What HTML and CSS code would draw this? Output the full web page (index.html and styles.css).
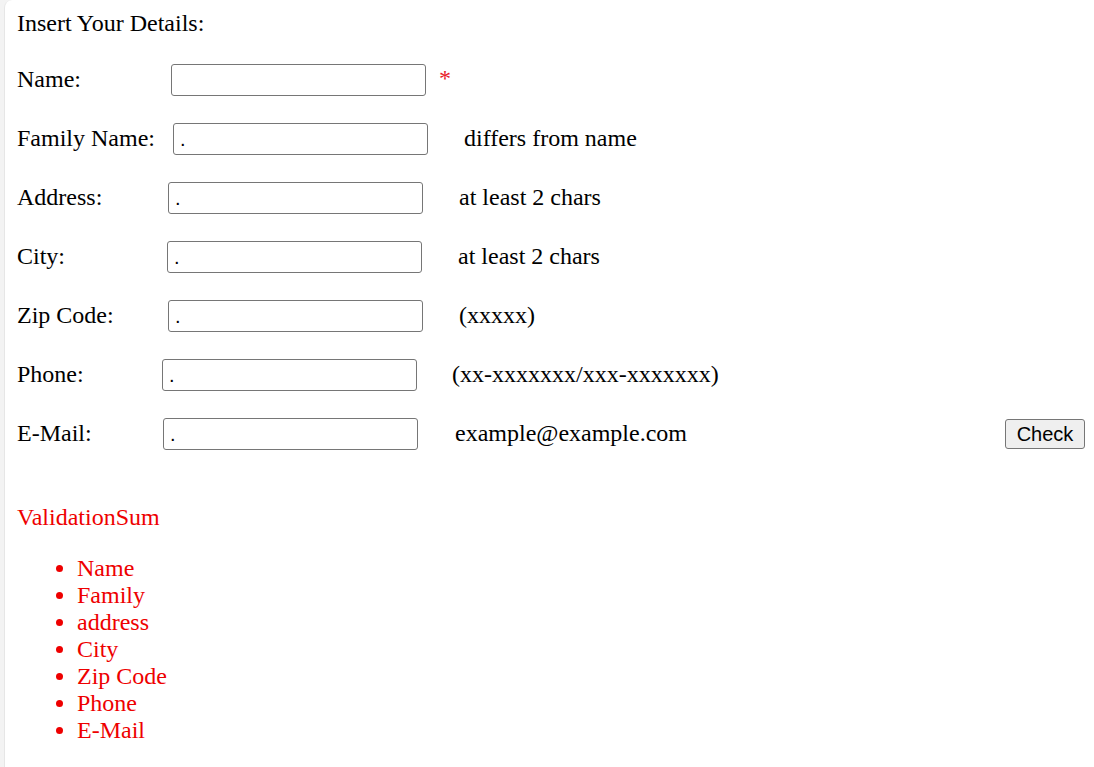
FILE: index.html
```html
<!DOCTYPE html>
<html>
<head>
<meta charset="utf-8">
<title>Insert Your Details</title>
<link rel="stylesheet" href="styles.css">
</head>
<body>
<div class="panel">
  <div class="title">Insert Your Details:</div>
  <form class="form">
    <div class="row">
      <label class="label l-name">Name:</label>
      <input class="field" type="text" value="">
      <span class="req">*</span>
    </div>
    <div class="row">
      <label class="label l-family">Family Name:</label>
      <input class="field" type="text" value=".">
      <span class="hint">differs from name</span>
    </div>
    <div class="row">
      <label class="label l-address">Address:</label>
      <input class="field" type="text" value=".">
      <span class="hint">at least 2 chars</span>
    </div>
    <div class="row">
      <label class="label l-city">City:</label>
      <input class="field" type="text" value=".">
      <span class="hint">at least 2 chars</span>
    </div>
    <div class="row">
      <label class="label l-zip">Zip Code:</label>
      <input class="field" type="text" value=".">
      <span class="hint">(xxxxx)</span>
    </div>
    <div class="row">
      <label class="label l-phone">Phone:</label>
      <input class="field" type="text" value=".">
      <span class="hint hint-phone">(xx-xxxxxxx/xxx-xxxxxxx)</span>
    </div>
    <div class="row">
      <label class="label l-email">E-Mail:</label>
      <input class="field" type="text" value=".">
      <span class="hint hint-email">example@example.com</span>
      <button class="check" type="button">Check</button>
    </div>
  </form>
  <div class="summary">ValidationSum</div>
  <ul class="errors">
    <li>Name</li>
    <li>Family</li>
    <li>address</li>
    <li>City</li>
    <li>Zip Code</li>
    <li>Phone</li>
    <li>E-Mail</li>
  </ul>
</div>
</body>
</html>
```

FILE: styles.css
```css
html, body {
  margin: 0;
  padding: 0;
}

body {
  background: #f3f3f3;
  font-family: "Liberation Serif", "Times New Roman", serif;
  font-size: 24px;
  color: #000;
}

.panel {
  margin-left: 4px;
  min-height: 767px;
  box-sizing: border-box;
  background: #fff;
  border-left: 1px solid #e6e6e6;
  border-top-left-radius: 8px;
  padding: 9px 9px 0 12px;
}

.title {
  line-height: 28px;
}

.form {
  display: flex;
  flex-direction: column;
  gap: 27px;
  margin-top: 27px;
}

.row {
  display: flex;
  align-items: center;
  height: 32px;
}

.label,
.hint {
  flex: none;
  line-height: 28px;
  margin-bottom: 2px;
}

.l-name { width: 154px; }
.l-family { width: 156px; }
.l-address { width: 151px; }
.l-city { width: 150px; }
.l-zip { width: 151px; }
.l-phone { width: 145px; }
.l-email { width: 146px; }

.field {
  box-sizing: border-box;
  width: 255px;
  height: 32px;
  margin: 0;
  padding: 0 6px;
  border: 1px solid #767676;
  border-radius: 3px;
  font-family: "Liberation Sans", Arial, sans-serif;
  font-size: 20px;
  color: #000;
  background: #fff;
}

.req {
  color: #e8202a;
  margin-left: 13px;
  position: relative;
  top: -2px;
}

.hint {
  margin-left: 36px;
}

.hint-phone { margin-left: 35px; }
.hint-email { margin-left: 37px; }

.check {
  margin-left: auto;
  width: 80px;
  height: 30px;
  padding: 0;
  box-sizing: border-box;
  border: 1px solid #767676;
  border-radius: 3px;
  background: #efefef;
  font-family: "Liberation Sans", Arial, sans-serif;
  font-size: 20px;
  color: #000;
}

.summary {
  color: #ee0000;
  margin-top: 53px;
  line-height: 28px;
}

.errors {
  color: #ee0000;
  margin: 24px 0 0 0;
  padding-left: 60px;
  line-height: 27px;
}
```
